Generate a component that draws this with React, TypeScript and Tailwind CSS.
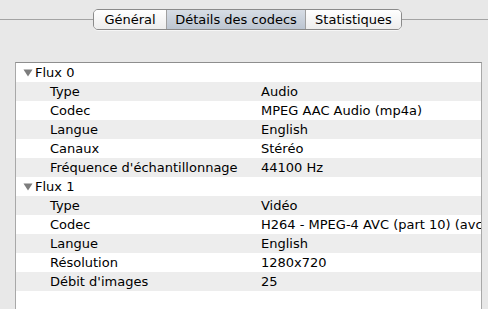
const rows: { label: string; value?: string; group?: boolean }[] = [
  { label: 'Flux 0', group: true },
  { label: 'Type', value: 'Audio' },
  { label: 'Codec', value: 'MPEG AAC Audio (mp4a)' },
  { label: 'Langue', value: 'English' },
  { label: 'Canaux', value: 'Stéréo' },
  { label: "Fréquence d'échantillonnage", value: '44100 Hz' },
  { label: 'Flux 1', group: true },
  { label: 'Type', value: 'Vidéo' },
  { label: 'Codec', value: 'H264 - MPEG-4 AVC (part 10) (avc1)' },
  { label: 'Langue', value: 'English' },
  { label: 'Résolution', value: '1280x720' },
  { label: "Débit d'images", value: '25' },
];

const tabs = [
  { name: 'Général', w: 'w-[72px]' },
  { name: 'Détails des codecs', w: 'w-[139px]', active: true },
  { name: 'Statistiques', w: 'w-[96px]' },
];

export default function App() {
  return (
    <div
      className="w-[488px] h-[309px] overflow-hidden bg-[#e8e8e8] text-black text-[13px] flex flex-col"
      style={{ fontFamily: '"Lucida Grande", "DejaVu Sans", sans-serif' }}
    >
      {/* tab bar */}
      <div className="relative h-[62px] shrink-0">
        <div className="absolute left-0 right-0 top-[19px] h-px bg-[#a3a3a3]" />
        <div className="absolute left-[93px] top-[9px] flex h-[21px] rounded-[5px] border border-[#8a8a8a] overflow-hidden shadow-[0_1px_0_rgba(255,255,255,0.6)]">
          {tabs.map((t, i) => (
            <div
              key={t.name}
              className={`${t.w} flex items-center justify-center leading-none ${
                i > 0 ? 'border-l border-[#a0a0a0]' : ''
              } ${
                t.active
                  ? 'bg-gradient-to-b from-[#d7dde5] to-[#bcc5d1]'
                  : 'bg-gradient-to-b from-[#ffffff] to-[#ededed]'
              }`}
            >
              {t.name}
            </div>
          ))}
        </div>
      </div>

      {/* outline view */}
      <div className="ml-[15px] w-[467px] flex-1 bg-white border-t border-t-[#8e8e8e] border-x border-x-[#a8a8a8] overflow-hidden">
        {rows.map((r, i) => (
          <div
            key={i}
            className={`flex h-[19px] items-center whitespace-nowrap ${
              i % 2 === 1 ? 'bg-[#ededed]' : 'bg-white'
            }`}
          >
            {r.group ? (
              <div className="flex items-center pl-[7px]">
                <svg width="10" height="9" viewBox="0 0 10 9" className="mr-[2px]">
                  <path d="M0.5 1.5 L9.5 1.5 L5 8.5 Z" fill="#7d7d7d" />
                </svg>
                <span>{r.label}</span>
              </div>
            ) : (
              <>
                <span className="pl-[34px] w-[245px] shrink-0">{r.label}</span>
                <span>{r.value}</span>
              </>
            )}
          </div>
        ))}
      </div>
    </div>
  );
}
